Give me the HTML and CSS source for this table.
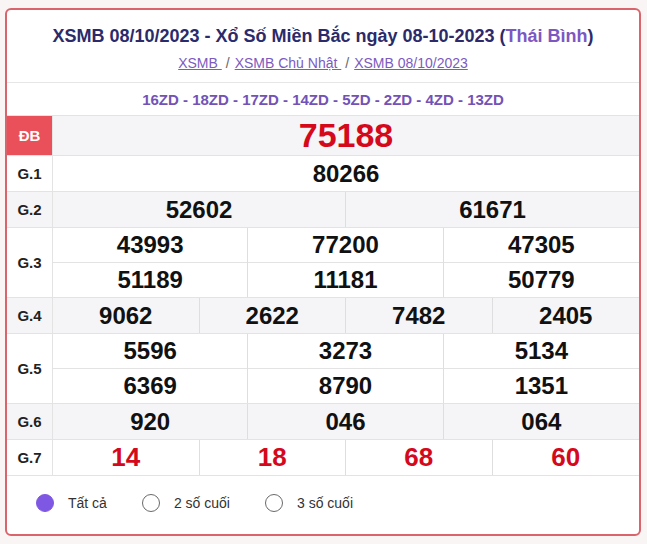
FILE: index.html
```html
<!DOCTYPE html>
<html lang="vi">
<head>
<meta charset="utf-8">
<title>XSMB 08/10/2023</title>
<link rel="stylesheet" href="styles.css">
</head>
<body>
<div class="card">
  <div class="head">
    <h1 class="title">XSMB 08/10/2023 - Xổ Số Miền Bắc ngày 08-10-2023 (<span class="prov">Thái Bình</span>)</h1>
    <div class="crumbs"><a href="#">XSMB </a><span class="sep">/</span><a href="#">XSMB Chủ Nhật </a><span class="sep">/</span><a href="#">XSMB 08/10/2023</a></div>
  </div>
  <div class="codes">16ZD - 18ZD - 17ZD - 14ZD - 5ZD - 2ZD - 4ZD - 13ZD</div>
  <div class="table">
    <div class="row r-db">
      <div class="lbl lbl-db">ĐB</div>
      <div class="nums c1"><div class="n db">75188</div></div>
    </div>
    <div class="row">
      <div class="lbl">G.1</div>
      <div class="nums c1"><div class="n">80266</div></div>
    </div>
    <div class="row gray">
      <div class="lbl">G.2</div>
      <div class="nums c2"><div class="n">52602</div><div class="n">61671</div></div>
    </div>
    <div class="row tall">
      <div class="lbl">G.3</div>
      <div class="nums c3 two">
        <div class="n">43993</div><div class="n">77200</div><div class="n">47305</div>
        <div class="n">51189</div><div class="n">11181</div><div class="n">50779</div>
      </div>
    </div>
    <div class="row gray">
      <div class="lbl">G.4</div>
      <div class="nums c4"><div class="n">9062</div><div class="n">2622</div><div class="n">7482</div><div class="n">2405</div></div>
    </div>
    <div class="row tall">
      <div class="lbl">G.5</div>
      <div class="nums c3 two">
        <div class="n">5596</div><div class="n">3273</div><div class="n">5134</div>
        <div class="n">6369</div><div class="n">8790</div><div class="n">1351</div>
      </div>
    </div>
    <div class="row gray">
      <div class="lbl">G.6</div>
      <div class="nums c3"><div class="n">920</div><div class="n">046</div><div class="n">064</div></div>
    </div>
    <div class="row">
      <div class="lbl">G.7</div>
      <div class="nums c4"><div class="n red">14</div><div class="n red">18</div><div class="n red">68</div><div class="n red">60</div></div>
    </div>
  </div>
  <div class="opts">
    <label class="opt"><span class="radio on"></span>Tất cả</label>
    <label class="opt"><span class="radio"></span>2 số cuối</label>
    <label class="opt"><span class="radio"></span>3 số cuối</label>
  </div>
</div>
</body>
</html>
```
FILE: styles.css
```css
* { box-sizing: border-box; }
html, body { margin: 0; padding: 0; }
body {
  background: #f8f5f4;
  font-family: "Liberation Sans", Arial, sans-serif;
  padding: 8px 6px 9px 5px;
  color: #222;
}
.card {
  background: #fff;
  border: 2px solid #d9646c;
  border-radius: 6px;
  height: 528px;
  overflow: hidden;
}
.head {
  text-align: center;
  padding: 15px 0 10px;
  border-bottom: 1px solid #e6e6e6;
}
.title {
  margin: 0;
  font-size: 18px;
  line-height: 22px;
  font-weight: bold;
  color: #2b2a6a;
}
.prov { color: #7d57c1; }
.crumbs {
  margin-top: 7px;
  font-size: 14px;
  line-height: 18px;
  color: #777;
}
.crumbs a { color: #7d5ac0; text-decoration: underline; }
.crumbs .sep { margin: 0 5px 0 4px; color: #666; }
.codes {
  height: 33px;
  line-height: 33px;
  text-align: center;
  font-size: 15px;
  font-weight: bold;
  color: #7352b5;
  border-bottom: 1px solid #e3e3e3;
}
.row {
  display: grid;
  grid-template-columns: 46px 1fr;
  height: 36px;
  border-bottom: 1px solid #e3e3e3;
}
.row.r-db { height: 40px; background: #f5f5f7; }
.row.tall { height: 70px; }
.row.gray { background: #f5f5f7; }
.lbl {
  display: flex;
  align-items: center;
  justify-content: center;
  font-size: 15px;
  font-weight: bold;
  color: #222;
  border-right: 1px solid #e3e3e3;
}
.lbl-db { background: #e9505a; color: #fff; }
.nums { display: grid; }
.c1 { grid-template-columns: 1fr; }
.c2 { grid-template-columns: repeat(2, 1fr); }
.c3 { grid-template-columns: repeat(3, 1fr); }
.c4 { grid-template-columns: repeat(4, 1fr); }
.two { grid-template-rows: 1fr 1fr; }
.n {
  display: flex;
  align-items: center;
  justify-content: center;
  font-size: 24px;
  font-weight: bold;
  color: #111;
  border-right: 1px solid #dedede;
}
.n:last-child, .c2 .n:nth-child(2n), .c3 .n:nth-child(3n), .c4 .n:nth-child(4n) { border-right: none; }
.two .n:nth-child(-n+3) { border-bottom: 1px solid #e3e3e3; }
.n.db { font-size: 34px; color: #d5091c; }
.n.red { font-size: 26px; color: #d5091c; }
.opts {
  display: flex;
  align-items: center;
  padding: 18px 0 0 29px;
  font-size: 14px;
  color: #333;
}
.opt {
  display: flex;
  align-items: center;
  margin-right: 35px;
}
.radio {
  width: 18px;
  height: 18px;
  border-radius: 50%;
  border: 1px solid #6a6a6a;
  margin-right: 14px;
  background: #fff;
}
.radio.on { background: #7e57e2; border-color: #7e57e2; }
```
